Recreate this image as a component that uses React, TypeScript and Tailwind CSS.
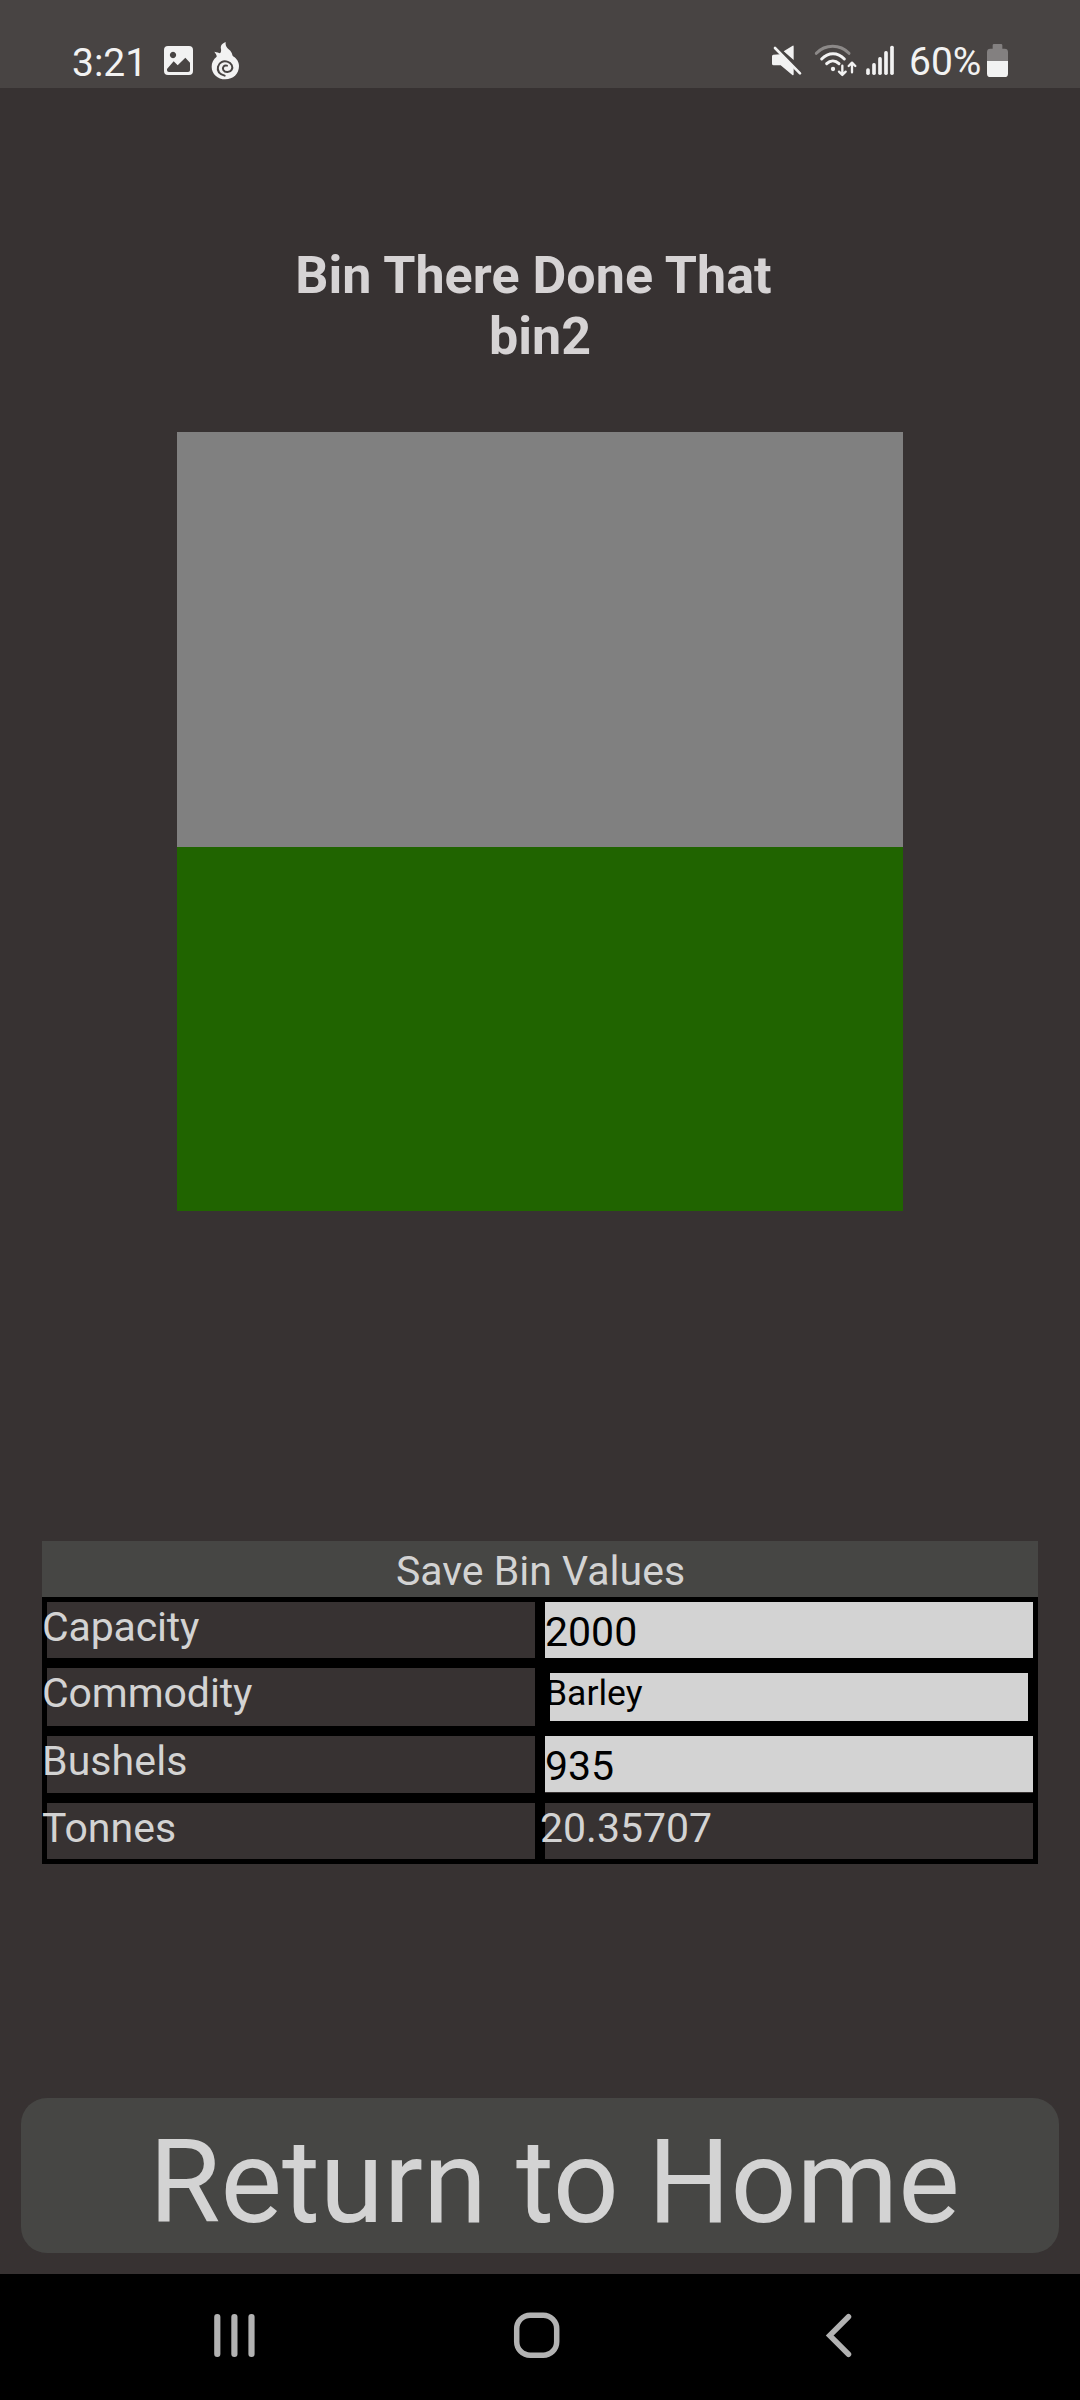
import type { ReactNode } from 'react';

function NotificationIcons() {
  return (
    <svg className="absolute left-[160px] top-[40px]" width="84" height="42" viewBox="330 60 252 126">
      <path
        fill="#f2f2f2"
        fillRule="evenodd"
        d="M354 78H417Q429 78 429 90V153Q429 165 417 165H354Q342 165 342 153V90Q342 78 354 78ZM369 95.500a9.500 9.500 0 1 0 .1 0ZM351 147V151Q351 156 357 156H414Q420 156 420 151V128L406 113L383 136L371 124Z"
      />
      <path
        fill="#f2f2f2"
        d="M527 66C514 71 511 79 513 87C514 93 513 97 510 100C507 97 501 98 493 95C496 101 501 104 500 110C490 117 485 128 485 140C485 162 503 178 526 178C549 178 567 162 567 138C567 126 560 115 549 109C546 104 547 99 541 92C535 86 525 82 527 66Z"
      />
      <path
        fill="none"
        stroke="#484443"
        strokeWidth="6"
        strokeLinecap="round"
        d="M524 167C509 162 501 152 504 140C507 127 520 121 532 125C545 129 550 141 545 149C540 158 525 159 520 150C516 141 523 134 531 137"
      />
    </svg>
  );
}

function ConnectivityIcons() {
  return (
    <svg className="absolute left-[770px] top-[40px]" width="126" height="40" viewBox="60 60 378 120">
      <g fill="#f2f2f2">
        <path d="M128 77Q131 75 131 80V120L101 94ZM91 103L70 104Q66 105 66 109V131Q66 136 71 136H92L127 165Q131 167 131 162V140Z" />
        <circle cx="249" cy="147" r="6.500" />
        <rect x="348.500" y="145" width="11" height="20" rx="5" />
        <rect x="366.500" y="129" width="11" height="36" rx="5" />
        <rect x="384.500" y="111" width="11" height="54" rx="5" />
        <rect x="402.500" y="93" width="11" height="72" rx="5" />
        <rect x="420.500" y="77" width="11" height="88" rx="5" />
      </g>
      <path d="M78 78L157 157" stroke="#484443" strokeWidth="8" />
      <path d="M75 84L150 160" stroke="#f2f2f2" strokeWidth="8" strokeLinecap="round" />
      <g fill="none" strokeLinecap="round" strokeWidth="9">
        <path stroke="#8c8988" d="M199 100C226 72 270 72 297 100" />
        <path stroke="#f2f2f2" d="M215 117C235 96 263 96 283 117" />
        <path stroke="#f2f2f2" d="M230 131C241 120 256 120 267 131" />
      </g>
      <g fill="none" stroke="#f2f2f2" strokeWidth="7" strokeLinecap="round" strokeLinejoin="round">
        <path d="M277 137V163M267 155L277 165L287 155" />
        <path d="M306 157V130M296 138L306 128L316 138" />
      </g>
    </svg>
  );
}

function BatteryIcon() {
  return (
    <svg className="absolute left-[987px] top-[43px]" width="22" height="36" viewBox="711 69 66 108">
      <path fill="#838080" d="M732 72H753Q757 72 757 76V86H764Q774 86 774 96V123H711V96Q711 86 721 86H728V76Q728 72 732 72Z" />
      <path fill="#f2f2f2" d="M711 123H774V161Q774 171 764 171H721Q711 171 711 161Z" />
    </svg>
  );
}

function StatusBar() {
  return (
    <header className="relative h-[88px] bg-[#484443] text-[39px] leading-[46px] text-[#f2f2f2]">
      <span className="absolute left-[72px] top-[40px]">3:21</span>
      <NotificationIcons />
      <ConnectivityIcons />
      <span className="absolute left-[909px] top-[39px]">60%</span>
      <BatteryIcon />
    </header>
  );
}

function Label({ children }: { children: ReactNode }) {
  return (
    <div className="border-5 border-black">
      <span className="-ml-[5px] mt-px block">{children}</span>
    </div>
  );
}

function BinTable() {
  return (
    <section className="mx-[42px] mt-[330px] text-[41px] leading-[48px] text-[#d3d3d3]">
      <button className="block h-[56px] w-full bg-[#464644] pt-[6px] pb-[2px] pl-px text-center">Save Bin Values</button>
      <div className="grid grid-cols-2 grid-rows-[66px_68px_67px_66px]">
        <Label>
          <span className="tracking-[-0.15px]">Capacity</span>
        </Label>
        <div className="border-5 border-black bg-[#d3d3d3] pt-[6px] text-black">2000</div>
        <Label>
          <span className="tracking-[-0.1px]">Commodity</span>
        </Label>
        <div className="border-10 border-black bg-[#d3d3d3] text-[35.5px] leading-[41px] text-black">
          <span className="-ml-[5px] block">Barley</span>
        </div>
        <Label>
          <span className="tracking-[0.1px]">Bushels</span>
        </Label>
        <div className="border-5 border-black">
          <div className="h-[56px] bg-[#d3d3d3] pt-[6px] text-black">935</div>
        </div>
        <Label>Tonnes</Label>
        <Label>20.35707</Label>
      </div>
    </section>
  );
}

function NavigationBar() {
  return (
    <nav className="relative h-[126px] bg-black">
      <svg className="absolute left-[210px] top-[36px]" width="50" height="52" fill="#b2b2b2">
        <rect x="4.200" y="4" width="6.200" height="43" rx="3" />
        <rect x="21.300" y="4" width="6.200" height="43" rx="3" />
        <rect x="38.400" y="4" width="6.200" height="43" rx="3" />
      </svg>
      <svg className="absolute left-[510px] top-[34px]" width="54" height="54" fill="none" stroke="#b2b2b2" strokeWidth="5.500">
        <rect x="6.700" y="7.200" width="40" height="40" rx="13.500" />
      </svg>
      <svg className="absolute left-[820px] top-[34px]" width="40" height="54" fill="none" stroke="#b2b2b2" strokeWidth="5.500" strokeLinecap="round">
        <path d="M28.500 8.700L9.700 27.500L28.500 46.300" />
      </svg>
    </nav>
  );
}

export default function App() {
  const filled = (935 / 2000) * 100;
  return (
    <div className="flex h-[2400px] w-[1080px] flex-col overflow-hidden bg-[#373232] font-[Roboto,sans-serif]">
      <StatusBar />
      <main className="flex flex-1 flex-col">
        <h1 className="mt-[157px] text-center text-[52px] leading-[61px] font-bold tracking-[0.06px] whitespace-pre text-[#d6d3d4]">
          {'Bin There Done That \u200b\nbin2'}
        </h1>
        <div className="mx-[177px] mt-[65px] flex h-[779px] shrink-0 flex-col justify-end bg-[#808080]">
          <div className="bg-[#206400]" style={{ height: `${filled}%` }} />
        </div>
        <BinTable />
        <button className="mx-[21px] mt-[234px] block h-[155px] rounded-[26px] bg-[#464644] pt-[12px] text-center text-[116px] leading-[136px] whitespace-pre text-[#d3d3d3]">
          {' Return to Home'}
        </button>
      </main>
      <NavigationBar />
    </div>
  );
}
